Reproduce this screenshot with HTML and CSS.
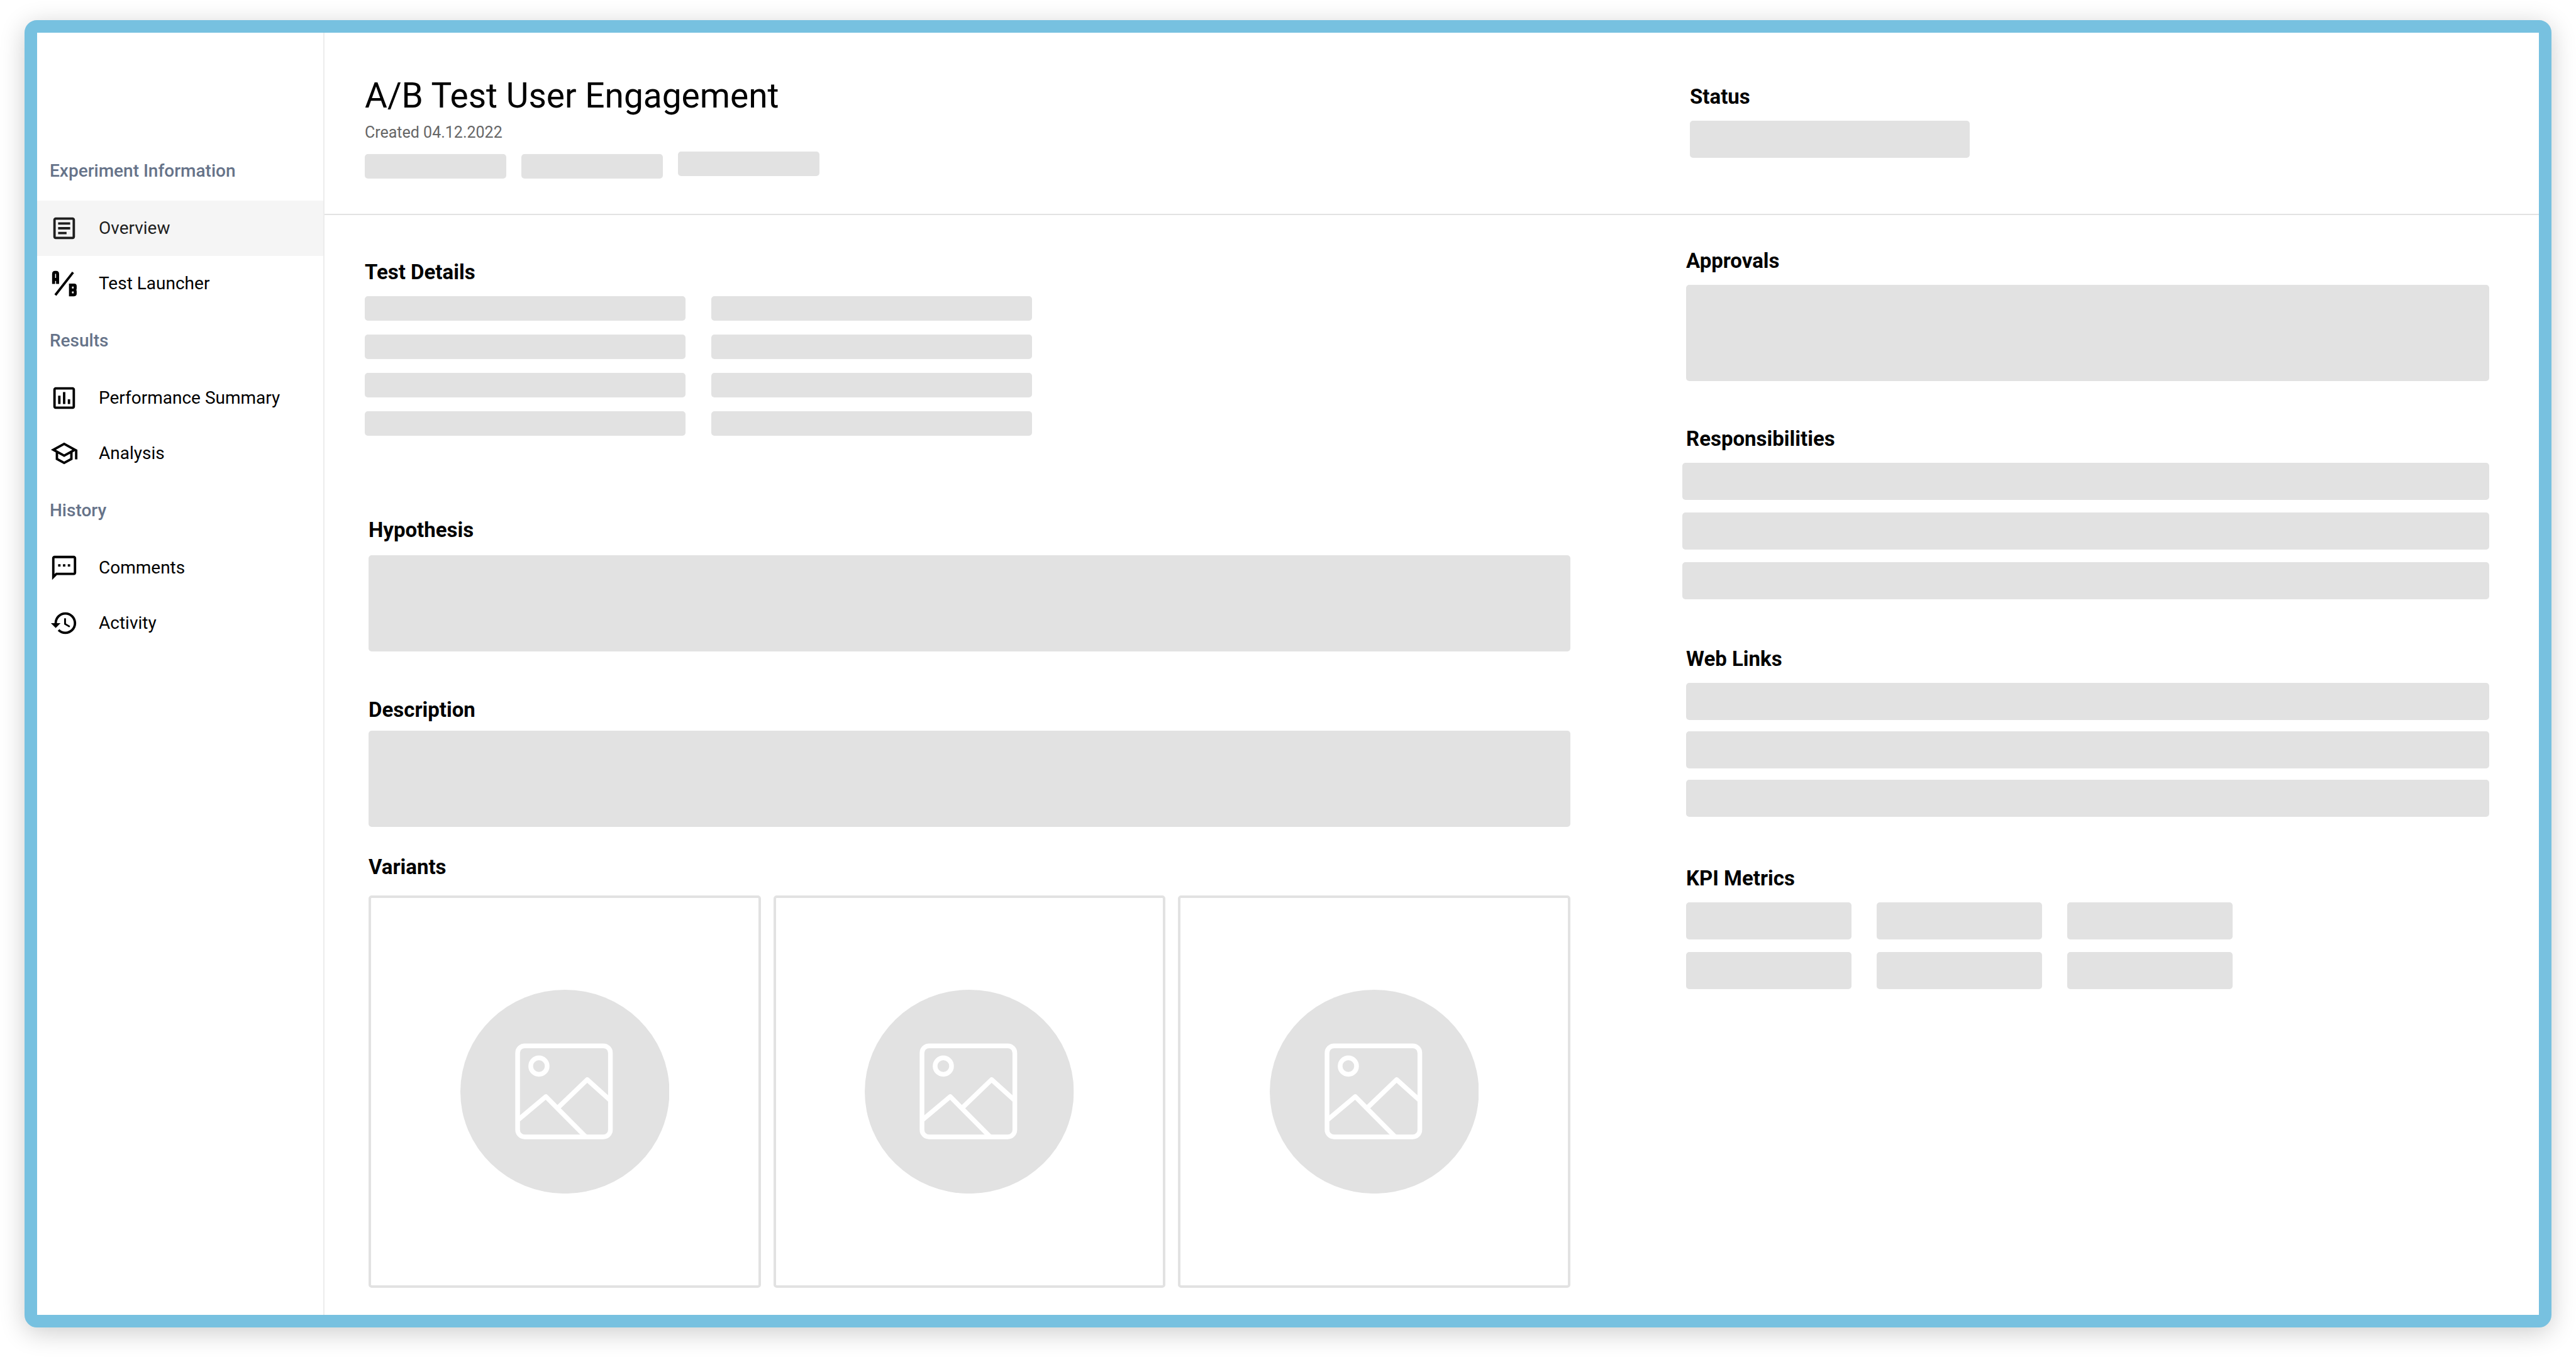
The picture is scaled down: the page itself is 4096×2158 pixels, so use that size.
FILE: index.html
```html
<!DOCTYPE html>
<html lang="en">
<head>
<meta charset="utf-8">
<title>A/B Test User Engagement</title>
<link rel="stylesheet" href="styles.css">
</head>
<body>
<div class="frame">
  <nav class="sidebar" aria-label="Experiment">
    <h2 class="nav-heading">Experiment Information</h2>
    <a class="nav-item nav-item--active" href="#overview" aria-current="page">
      <svg class="nav-icon" viewBox="0 0 24 24" aria-hidden="true"><path d="M19 5v14H5V5h14m0-2H5c-1.100 0-2 .9-2 2v14c0 1.100.9 2 2 2h14c1.100 0 2-.9 2-2V5c0-1.100-.9-2-2-2z"/><path d="M14 17H7v-2h7v2zm3-4H7v-2h10v2zm0-4H7V7h10v2z"/></svg>
      Overview
    </a>
    <a class="nav-item" href="#launcher">
      <svg class="nav-icon nav-icon--line" viewBox="0 0 24 24" aria-hidden="true"><path stroke-width="2.500" d="M3.250 12.200V4q0-1.300 1.300-1.300h.7q1.300 0 1.300 1.300v8.200M3.300 8.500h3.300"/><path stroke-width="2" d="M19.400 2.700L4.700 21.500"/><path stroke-width="2.500" d="M17.250 13.200h3q.9 0 .9.900v1.800q0 1-1 1.300q1 .3 1 1.300v1.900q0 .9-.9.900h-3zM17.300 17.250h3"/></svg>
      Test Launcher
    </a>
    <h2 class="nav-heading">Results</h2>
    <a class="nav-item" href="#performance">
      <svg class="nav-icon" viewBox="0 0 24 24" aria-hidden="true"><path d="M19 3H5c-1.100 0-2 .9-2 2v14c0 1.100.9 2 2 2h14c1.100 0 2-.9 2-2V5c0-1.100-.9-2-2-2zm0 16H5V5h14v14zM7 10h2v7H7zm4-3h2v10h-2zm4 6h2v4h-2z"/></svg>
      Performance Summary
    </a>
    <a class="nav-item" href="#analysis">
      <svg class="nav-icon" viewBox="0 0 24 24" aria-hidden="true"><path d="M12 3L1 9l4 2.180v6L12 21l7-3.820v-6l2-1.090V17h2V9L12 3zm6.820 6L12 12.720 5.180 9 12 5.280 18.820 9zM17 15.990l-5 2.730-5-2.730v-3.720L12 15l5-2.730v3.720z"/></svg>
      Analysis
    </a>
    <h2 class="nav-heading">History</h2>
    <a class="nav-item" href="#comments">
      <svg class="nav-icon" viewBox="0 0 24 24" aria-hidden="true"><path d="M20 2H4c-1.100 0-2 .9-2 2v18l4-4h14c1.100 0 2-.9 2-2V4c0-1.100-.9-2-2-2zm0 14H5.170L4 17.170V4h16v12zM7 9h2v2H7zm4 0h2v2h-2zm4 0h2v2h-2z"/></svg>
      Comments
    </a>
    <a class="nav-item" href="#activity">
      <svg class="nav-icon" viewBox="0 0 24 24" aria-hidden="true"><path d="M13 3c-4.970 0-9 4.030-9 9H1l3.890 3.890.070.140L9 12H6c0-3.870 3.130-7 7-7s7 3.130 7 7-3.130 7-7 7c-1.930 0-3.680-.79-4.940-2.060l-1.420 1.420C8.270 19.990 10.510 21 13 21c4.970 0 9-4.030 9-9s-4.030-9-9-9zm-1 5v5l4.280 2.540.72-1.210-3.500-2.080V8H12z"/></svg>
      Activity
    </a>
  </nav>

  <main class="main">
    <header class="header columns">
      <div class="intro">
        <h1 class="title">A/B Test User Engagement</h1>
        <p class="created">Created 04.12.2022</p>
        <div class="tags">
          <span class="block tag"></span>
          <span class="block tag"></span>
          <span class="block tag tag--raised"></span>
        </div>
      </div>
      <section class="status">
        <h2 class="heading">Status</h2>
        <div class="block status-value"></div>
      </section>
    </header>

    <div class="columns">
      <div class="content">
        <section class="details">
          <h2 class="heading">Test Details</h2>
          <div class="details-grid">
            <div class="block"></div><div class="block"></div>
            <div class="block"></div><div class="block"></div>
            <div class="block"></div><div class="block"></div>
            <div class="block"></div><div class="block"></div>
          </div>
        </section>
        <section class="hypothesis">
          <h2 class="heading">Hypothesis</h2>
          <div class="block block--area"></div>
        </section>
        <section class="description">
          <h2 class="heading">Description</h2>
          <div class="block block--area"></div>
        </section>
        <section class="variants">
          <h2 class="heading">Variants</h2>
          <svg width="0" height="0" class="symbols" aria-hidden="true">
            <symbol id="picture" viewBox="0 0 356 347">
              <ellipse cx="178" cy="173.500" rx="178" ry="173.500" fill="#e2e2e2"/>
              <g fill="none" stroke="#fff" stroke-width="8" stroke-linejoin="round">
                <rect x="97.500" y="95.500" width="158" height="155" rx="12"/>
                <circle cx="133.800" cy="130" r="14"/>
                <path d="M99 221L145.600 182L213 250"/>
                <path d="M166 201L216 153L256 189"/>
              </g>
            </symbol>
          </svg>
          <div class="cards">
            <div class="card"><svg class="picture" role="img" aria-label="Variant 1"><use href="#picture"/></svg></div>
            <div class="card"><svg class="picture" role="img" aria-label="Variant 2"><use href="#picture"/></svg></div>
            <div class="card"><svg class="picture" role="img" aria-label="Variant 3"><use href="#picture"/></svg></div>
          </div>
        </section>
      </div>

      <aside class="aside">
        <section class="approvals">
          <h2 class="heading">Approvals</h2>
          <div class="block block--area"></div>
        </section>
        <section class="responsibilities">
          <h2 class="heading">Responsibilities</h2>
          <div class="bars">
            <div class="block"></div><div class="block"></div><div class="block"></div>
          </div>
        </section>
        <section class="links">
          <h2 class="heading">Web Links</h2>
          <div class="bars">
            <div class="block"></div><div class="block"></div><div class="block"></div>
          </div>
        </section>
        <section class="metrics">
          <h2 class="heading">KPI Metrics</h2>
          <div class="metrics-grid">
            <div class="block"></div><div class="block"></div><div class="block"></div>
            <div class="block"></div><div class="block"></div><div class="block"></div>
          </div>
        </section>
      </aside>
    </div>
  </main>
</div>
</body>
</html>
```
FILE: styles.css
```css
* {
  box-sizing: border-box;
}

body {
  display: flex;
  min-height: 100vh;
  margin: 0;
  padding: 32px 39px 47px 39px;
  background: #fff;
  color: #000;
  font-family: Roboto, "Liberation Sans", sans-serif;
}

h1,
h2,
p {
  margin: 0;
}

.frame {
  display: flex;
  flex: 1;
  min-width: 0;
  border: 20px solid #77c1e0;
  border-radius: 20px;
  background: #fff;
  box-shadow: 0 8px 40px rgba(0, 0, 0, 0.2);
}

/* Sidebar */

.sidebar {
  flex: 0 0 457px;
  padding-top: 173px;
  border-right: 2px solid #ececec;
}

.nav-heading {
  padding: 31px 20px;
  color: #667389;
  font-size: 28px;
  font-weight: 500;
  line-height: 32px;
}

.nav-item {
  display: flex;
  align-items: center;
  gap: 32px;
  height: 88px;
  padding: 0 20px;
  color: #000;
  font-size: 28px;
  line-height: 32px;
  text-decoration: none;
  white-space: nowrap;
}

.nav-item--active {
  background: #f5f5f5;
  color: #1f1f1f;
}

.nav-icon {
  flex: none;
  width: 46px;
  height: 46px;
  fill: currentColor;
}

.nav-icon--line {
  fill: none;
  stroke: currentColor;
}

/* Main area */

.main {
  flex: 1;
  min-width: 0;
}

.columns {
  display: grid;
  grid-template-columns: minmax(0, 1917fr) minmax(0, 1277fr);
  column-gap: 184px;
  padding: 0 79px 0 64px;
}

.header {
  padding-bottom: 56px;
  border-bottom: 2px solid #e2e2e2;
}

.intro {
  padding-top: 68px;
}

.title {
  font-size: 55px;
  font-weight: 400;
  line-height: 64px;
}

.created {
  margin-top: 13px;
  color: #666;
  font-size: 25px;
  line-height: 28px;
}

.tags {
  display: flex;
  align-items: flex-end;
  gap: 24px;
  margin-top: 16px;
}

.tag {
  width: 225px;
  height: 39px;
}

.tag--raised {
  margin-bottom: 4px;
}

.status {
  padding: 82px 0 0 6px;
}

.status-value {
  max-width: 445px;
  height: 59px;
}

.heading {
  margin-bottom: 18px;
  font-size: 33px;
  font-weight: 700;
  line-height: 40px;
}

.block {
  border-radius: 5px;
  background: #e2e2e2;
}

.block--area {
  height: 153px;
}

/* Left column */

.content {
  padding: 71px 0 43px;
}

.details-grid {
  display: grid;
  grid-template-columns: repeat(2, minmax(0, 510px));
  grid-auto-rows: 39px;
  gap: 22px 41px;
}

.hypothesis,
.description,
.variants {
  padding-left: 6px;
}

.hypothesis {
  margin-top: 130px;
}

.hypothesis .heading {
  margin-bottom: 20px;
}

.description {
  margin-top: 73px;
}

.description .heading {
  margin-bottom: 13px;
}

.variants {
  margin-top: 44px;
}

.variants .heading {
  margin-bottom: 25px;
}

.symbols {
  display: block;
}

.cards {
  display: grid;
  grid-template-columns: repeat(3, minmax(0, 1fr));
  gap: 20px;
}

.card {
  display: flex;
  align-items: center;
  justify-content: center;
  aspect-ratio: 1;
  border: 4px solid #e2e2e2;
  border-radius: 5px;
}

.picture {
  width: 54%;
  aspect-ratio: 356 / 347;
}

/* Right column */

.aside {
  padding: 53px 0 43px;
}

.bars {
  display: grid;
  grid-auto-rows: 59px;
  gap: 20px;
}

.responsibilities {
  margin-top: 72px;
}

.responsibilities .bars {
  margin-left: -6px;
}

.links {
  margin-top: 75px;
}

.links .bars {
  gap: 18px;
}

.metrics {
  margin-top: 78px;
}

.metrics-grid {
  display: grid;
  grid-template-columns: repeat(3, minmax(0, 263px));
  grid-auto-rows: 59px;
  gap: 20px 40px;
}
```
